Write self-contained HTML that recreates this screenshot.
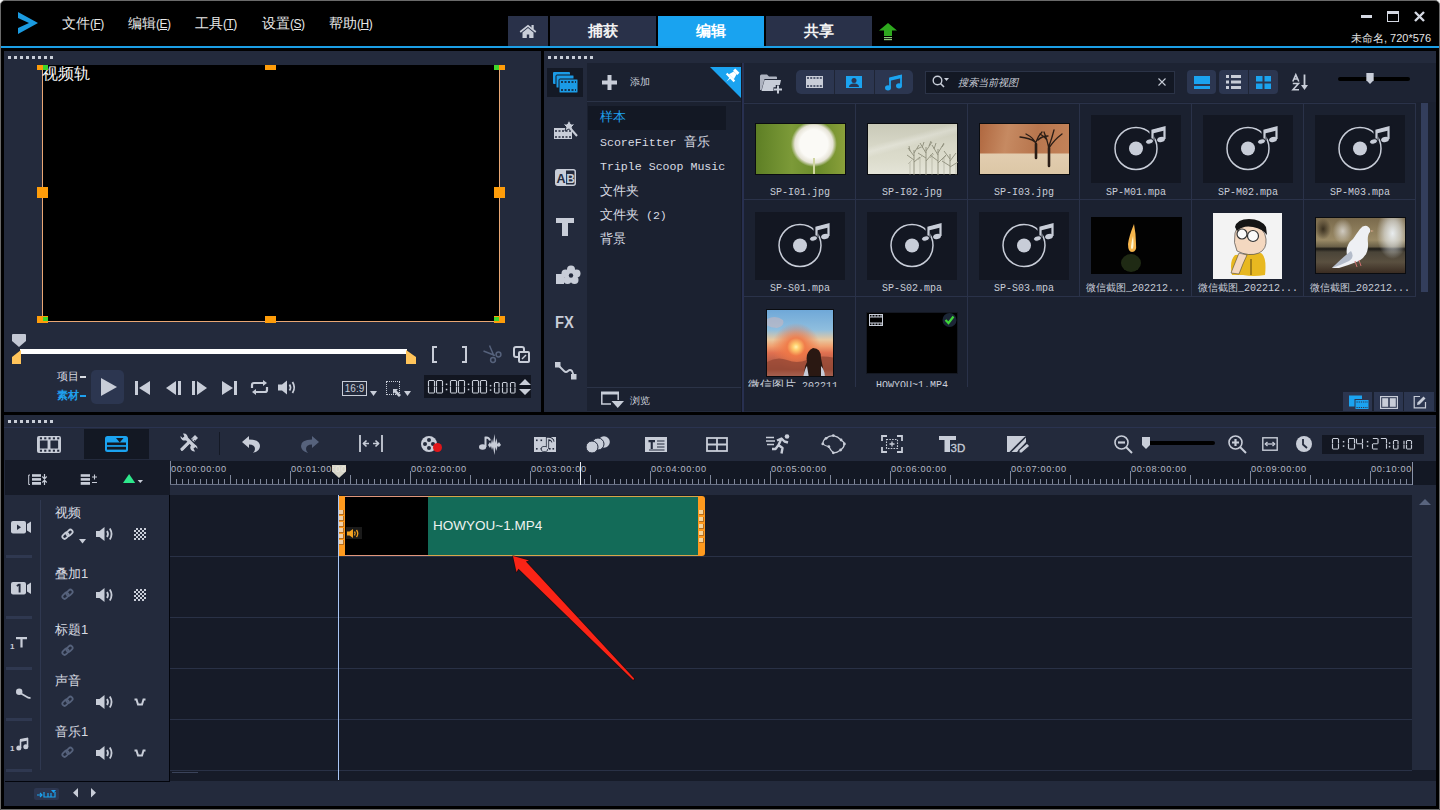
<!DOCTYPE html>
<html><head><meta charset="utf-8">
<style>
*{margin:0;padding:0;box-sizing:border-box}
html,body{width:1440px;height:810px;overflow:hidden;background:#000}
body{position:relative;font-family:"Liberation Sans",sans-serif;color:#d8dbe3}
.a{position:absolute}
.mono{font-family:"Liberation Mono",monospace}
.dots{position:absolute;height:3px;background:repeating-linear-gradient(90deg,#c9ced8 0 3px,transparent 3px 6px)}
svg{position:absolute;overflow:visible}
</style></head><body>
<!-- window frame -->
<div class="a" style="left:0;top:0;width:6px;height:6px;background:#f4f4f4"></div><div class="a" style="left:1434px;top:0;width:6px;height:6px;background:#f4f4f4"></div><div class="a" style="left:0;top:0;width:1440px;height:810px;background:#000;border:1px solid #6a6a6a;border-radius:5px 5px 0 0"></div>

<!-- TITLE BAR -->
<div id="title">
  <svg style="left:17px;top:11px" width="22" height="24" viewBox="0 0 22 24"><path d="M1 1 L21 12 L1 23 L1 17 L12 12 L1 7 Z" fill="#1b9be0"/></svg>
  <div class="a" style="left:62px;top:15px;font-size:14px;color:#e8e8e8;white-space:nowrap">文件<span style="font-size:12px;letter-spacing:-0.5px">(<u style="text-decoration-thickness:1px;text-underline-offset:1px">F</u>)</span></div>
  <div class="a" style="left:128px;top:15px;font-size:14px;color:#e8e8e8;white-space:nowrap">编辑<span style="font-size:12px;letter-spacing:-0.5px">(<u style="text-decoration-thickness:1px;text-underline-offset:1px">E</u>)</span></div>
  <div class="a" style="left:195px;top:15px;font-size:14px;color:#e8e8e8;white-space:nowrap">工具<span style="font-size:12px;letter-spacing:-0.5px">(<u style="text-decoration-thickness:1px;text-underline-offset:1px">T</u>)</span></div>
  <div class="a" style="left:262px;top:15px;font-size:14px;color:#e8e8e8;white-space:nowrap">设置<span style="font-size:12px;letter-spacing:-0.5px">(<u style="text-decoration-thickness:1px;text-underline-offset:1px">S</u>)</span></div>
  <div class="a" style="left:329px;top:15px;font-size:14px;color:#e8e8e8;white-space:nowrap">帮助<span style="font-size:12px;letter-spacing:-0.5px">(<u style="text-decoration-thickness:1px;text-underline-offset:1px">H</u>)</span></div>
  <!-- tabs -->
  <div class="a" style="left:508px;top:16px;width:40px;height:30px;background:#293149"></div>
  <svg style="left:519px;top:24px" width="18" height="15" viewBox="0 0 18 15"><path d="M3.5 8.5 L9 4 L14.5 8.5 V14 H10.2 V10.5 H7.8 V14 H3.5Z" fill="#c8cdd8"/><path d="M1.2 8 L9 1.8 L16.8 8" stroke="#c8cdd8" stroke-width="1.7" fill="none"/><rect x="12.5" y="1" width="2.2" height="4" fill="#c8cdd8"/></svg>
  <div class="a" style="left:550px;top:16px;width:106px;height:30px;background:#293149;text-align:center;line-height:30px;font-size:15px;font-weight:bold;color:#f2f2f2">捕获</div>
  <div class="a" style="left:658px;top:16px;width:106px;height:30px;background:#19a3f0;text-align:center;line-height:30px;font-size:15px;font-weight:bold;color:#fff">编辑</div>
  <div class="a" style="left:766px;top:16px;width:106px;height:30px;background:#293149;text-align:center;line-height:30px;font-size:15px;font-weight:bold;color:#f2f2f2">共享</div>
  <svg style="left:879px;top:23px" width="19" height="18" viewBox="0 0 19 18"><path d="M9 0 L18 7.5 H13 V13 H5 V7.5 H0Z" fill="#2ea81e"/><rect x="5" y="14" width="8" height="1.2" fill="#8cc878"/><rect x="5" y="16" width="8" height="1.2" fill="#8cc878"/></svg>
  <!-- window controls -->
  <div class="a" style="left:1361px;top:15px;width:11px;height:3px;background:#d4d8e2"></div>
  <div class="a" style="left:1387px;top:11px;width:12px;height:11px;border:1px solid #d4d8e2;border-top-width:3px"></div>
  <svg style="left:1414px;top:11px" width="11" height="11" viewBox="0 0 11 11"><path d="M1 1 L10 10 M10 1 L1 10" stroke="#d4d8e2" stroke-width="2.4"/></svg>
  <div class="a" style="left:1351px;top:31px;font-size:11px;color:#e4e4e4;white-space:nowrap">未命名, 720*576</div>
</div>
<!-- blue line -->
<div class="a" style="left:1px;top:46px;width:1438px;height:2px;background:#1c9fe6"></div>

<!-- PREVIEW PANEL -->
<div class="a" style="left:4px;top:51px;width:537px;height:361px;background:#232a3c"></div>
<div class="dots" style="left:8px;top:56px;width:48px"></div>


<!-- preview black -->
<div class="a" style="left:42px;top:65px;width:458px;height:257px;background:#000;border:1px solid #e9a774;border-top:none"></div>
<div class="a" style="left:42px;top:65px;font-size:16px;color:#f8f8f8;line-height:17px">视频轨</div>
<!-- handles -->
<div class="a" style="left:37px;top:65px;width:11px;height:5px;background:#ff9d0a"></div>
<div class="a" style="left:43px;top:65px;width:5px;height:5px;background:#3ed62c"></div>
<div class="a" style="left:265px;top:65px;width:11px;height:5px;background:#ff9d0a"></div>
<div class="a" style="left:494px;top:65px;width:11px;height:5px;background:#ff9d0a"></div>
<div class="a" style="left:494px;top:65px;width:5px;height:5px;background:#3ed62c"></div>
<div class="a" style="left:37px;top:187px;width:11px;height:11px;background:#ff9d0a"></div>
<div class="a" style="left:494px;top:187px;width:11px;height:11px;background:#ff9d0a"></div>
<div class="a" style="left:37px;top:316px;width:11px;height:7px;background:#ff9d0a"></div>
<div class="a" style="left:43px;top:317px;width:5px;height:4px;background:#3ed62c"></div>
<div class="a" style="left:265px;top:316px;width:11px;height:7px;background:#ff9d0a"></div>
<div class="a" style="left:494px;top:316px;width:11px;height:7px;background:#ff9d0a"></div>
<div class="a" style="left:494px;top:317px;width:5px;height:4px;background:#3ed62c"></div>
<!-- scrubber -->
<svg style="left:12px;top:334px" width="14" height="14" viewBox="0 0 14 14"><path d="M1 0 H13 Q14 0 14 1 V7 L7 13 L0 7 V1 Q0 0 1 0Z" fill="#c3c8d4"/></svg>
<div class="a" style="left:20px;top:349px;width:387px;height:5px;background:#fff"></div>
<svg style="left:12px;top:350px" width="10" height="14" viewBox="0 0 10 14"><path d="M9 0 V14 H0 V7 Z" fill="#ffc45a"/></svg>
<svg style="left:406px;top:350px" width="10" height="14" viewBox="0 0 10 14"><path d="M0 0 V14 H10 V7 Z" fill="#ffc45a"/></svg>
<!-- bracket / scissors / copy -->
<svg style="left:431px;top:346px" width="8" height="17" viewBox="0 0 8 17"><path d="M6 1 H2 V16 H6" stroke="#c8cdd8" stroke-width="2" fill="none"/></svg>
<svg style="left:461px;top:346px" width="8" height="17" viewBox="0 0 8 17"><path d="M1 1 H5 V16 H1" stroke="#c8cdd8" stroke-width="2" fill="none"/></svg>
<svg style="left:483px;top:345px" width="20" height="19" viewBox="0 0 20 19"><path d="M6.5 0.5 L11 11 M0.5 6 L12 10.5" stroke="#56627c" stroke-width="1.5" fill="none"/><circle cx="15.5" cy="9.5" r="2.4" stroke="#56627c" stroke-width="1.5" fill="none"/><circle cx="10" cy="15" r="2.4" stroke="#56627c" stroke-width="1.5" fill="none"/></svg>
<svg style="left:513px;top:346px" width="17" height="17" viewBox="0 0 17 17"><rect x="1" y="1" width="10" height="10" rx="2" stroke="#c8cdd8" stroke-width="2" fill="none"/><rect x="6" y="6" width="10" height="10" rx="1" stroke="#c8cdd8" stroke-width="2" fill="#232a3c"/><path d="M9 13 L13 9" stroke="#c8cdd8" stroke-width="1.5"/></svg>
<!-- project/clip labels -->
<div class="a" style="left:57px;top:369px;font-size:11px;color:#d8dbe2;white-space:nowrap;line-height:14px">项目<span style="display:inline-block;width:6px;height:2px;background:#d8dbe2;vertical-align:middle;margin-left:1px"></span></div>
<div class="a" style="left:57px;top:388px;font-size:11px;color:#1fa0ee;white-space:nowrap;line-height:14px;font-weight:bold">素材<span style="display:inline-block;width:6px;height:2px;background:#1fa0ee;vertical-align:middle;margin-left:1px"></span></div>
<div class="a" style="left:91px;top:370px;width:33px;height:34px;background:#2c3650;border-radius:5px"></div>
<svg style="left:101px;top:378px" width="16" height="18" viewBox="0 0 16 18"><path d="M0 0 L16 9 L0 18Z" fill="#c8cdd8"/></svg>
<svg style="left:135px;top:381px" width="15" height="14" viewBox="0 0 15 14"><rect x="0" y="0" width="3" height="14" fill="#c8cdd8"/><path d="M15 0 V14 L4 7Z" fill="#c8cdd8"/></svg>
<svg style="left:166px;top:381px" width="15" height="14" viewBox="0 0 15 14"><path d="M10 0 V14 L0 7Z" fill="#c8cdd8"/><rect x="12" y="0" width="3" height="14" fill="#c8cdd8"/></svg>
<svg style="left:192px;top:381px" width="15" height="14" viewBox="0 0 15 14"><rect x="0" y="0" width="3" height="14" fill="#c8cdd8"/><path d="M5 0 V14 L15 7Z" fill="#c8cdd8"/></svg>
<svg style="left:222px;top:381px" width="15" height="14" viewBox="0 0 15 14"><path d="M0 0 V14 L11 7Z" fill="#c8cdd8"/><rect x="12" y="0" width="3" height="14" fill="#c8cdd8"/></svg>
<svg style="left:250px;top:380px" width="19" height="15" viewBox="0 0 19 15"><path d="M2 8 V5 Q2 3 4 3 H14" stroke="#c8cdd8" stroke-width="2.2" fill="none"/><path d="M13 0 L17 3 L13 6Z" fill="#c8cdd8"/><path d="M17 7 V10 Q17 12 15 12 H5" stroke="#c8cdd8" stroke-width="2.2" fill="none"/><path d="M6 9 L2 12 L6 15Z" fill="#c8cdd8"/></svg>
<svg style="left:278px;top:380px" width="19" height="15" viewBox="0 0 19 15"><path d="M0 4.5 H4 L9 0.5 V14.5 L4 10.5 H0Z" fill="#c8cdd8"/><path d="M11.5 4.5 Q13.5 7.5 11.5 10.5 M14.5 2 Q18 7.5 14.5 13" stroke="#c8cdd8" stroke-width="1.8" fill="none"/></svg>
<!-- aspect / select -->
<div class="a" style="left:342px;top:381px;width:25px;height:15px;border:1px solid #c8cdd8;font-size:10px;line-height:13px;text-align:center;color:#c8cdd8">16:9</div>
<svg style="left:370px;top:391px" width="7" height="5" viewBox="0 0 7 5"><path d="M0 0 H7 L3.5 5Z" fill="#c8cdd8"/></svg>
<div class="a" style="left:386px;top:381px;width:14px;height:14px;border:1px dotted #c8cdd8"></div>
<svg style="left:393px;top:389px" width="8" height="8" viewBox="0 0 8 8"><path d="M0 0 H5 L3.5 1.5 L8 6 L6 8 L1.5 3.5 L0 5Z" fill="#c8cdd8"/></svg>
<svg style="left:404px;top:391px" width="7" height="5" viewBox="0 0 7 5"><path d="M0 0 H7 L3.5 5Z" fill="#c8cdd8"/></svg>
<!-- timecode -->
<div class="a" style="left:424px;top:375px;width:107px;height:23px;background:#121621"></div>
<svg style="left:0;top:0" width="1440" height="810" viewBox="0 0 1440 810"><path d="M429.40 380.50 H433.60 M429.40 393.00 H433.60 M428.50 381.40 V385.85 M428.50 387.65 V392.10 M434.50 381.40 V385.85 M434.50 387.65 V392.10 M437.40 380.50 H441.60 M437.40 393.00 H441.60 M436.50 381.40 V385.85 M436.50 387.65 V392.10 M442.50 381.40 V385.85 M442.50 387.65 V392.10 M451.40 380.50 H455.60 M451.40 393.00 H455.60 M450.50 381.40 V385.85 M450.50 387.65 V392.10 M456.50 381.40 V385.85 M456.50 387.65 V392.10 M459.40 380.50 H463.60 M459.40 393.00 H463.60 M458.50 381.40 V385.85 M458.50 387.65 V392.10 M464.50 381.40 V385.85 M464.50 387.65 V392.10 M473.40 380.50 H477.60 M473.40 393.00 H477.60 M472.50 381.40 V385.85 M472.50 387.65 V392.10 M478.50 381.40 V385.85 M478.50 387.65 V392.10 M481.40 380.50 H485.60 M481.40 393.00 H485.60 M480.50 381.40 V385.85 M480.50 387.65 V392.10 M486.50 381.40 V385.85 M486.50 387.65 V392.10 M495.40 382.50 H498.10 M495.40 393.00 H498.10 M494.50 383.40 V386.85 M494.50 388.65 V392.10 M499.00 383.40 V386.85 M499.00 388.65 V392.10 M503.40 382.50 H506.10 M503.40 393.00 H506.10 M502.50 383.40 V386.85 M502.50 388.65 V392.10 M507.00 383.40 V386.85 M507.00 388.65 V392.10 M511.40 382.50 H514.10 M511.40 393.00 H514.10 M510.50 383.40 V386.85 M510.50 388.65 V392.10 M515.00 383.40 V386.85 M515.00 388.65 V392.10" stroke="#c8cdd8" stroke-width="1.15" fill="none" stroke-linecap="square"/><rect x="445.80" y="383.55" width="1.5" height="1.5" fill="#c8cdd8"/><rect x="445.80" y="388.80" width="1.5" height="1.5" fill="#c8cdd8"/><rect x="467.80" y="383.55" width="1.5" height="1.5" fill="#c8cdd8"/><rect x="467.80" y="388.80" width="1.5" height="1.5" fill="#c8cdd8"/><rect x="489.80" y="384.95" width="1.5" height="1.5" fill="#c8cdd8"/><rect x="489.80" y="389.36" width="1.5" height="1.5" fill="#c8cdd8"/></svg>
<svg style="left:519px;top:378px" width="12" height="18" viewBox="0 0 12 18"><path d="M0 7 L6 1 L12 7Z M0 11 L6 17 L12 11Z" fill="#c8cdd8"/></svg>

<!-- LIBRARY PANEL -->
<div class="a" style="left:544px;top:51px;width:892px;height:361px;background:#232a3c"></div>
<div class="dots" style="left:548px;top:56px;width:48px"></div>


<!-- left icon column -->
<div class="a" style="left:547px;top:68px;width:36px;height:29px;background:#141925"></div>
<svg style="left:553px;top:72px" width="25" height="22" viewBox="0 0 25 22"><rect x="0" y="0" width="17" height="12" rx="1" fill="#1b9be6"/><rect x="3" y="3" width="18" height="13" rx="1" fill="#1b9be6" stroke="#141925" stroke-width="1"/><rect x="6" y="7" width="19" height="14" rx="1" fill="#1b9be6" stroke="#141925" stroke-width="1"/><path d="M8 10 h15 M8 18 h15" stroke="#141925" stroke-width="1.4" stroke-dasharray="2 1.5"/></svg>
<svg style="left:554px;top:120px" width="24" height="20" viewBox="0 0 24 20"><rect x="0" y="8" width="18" height="11" fill="#c8cdd8"/><path d="M1 11 h16 M1 17 h16" stroke="#232a3c" stroke-width="1.3" stroke-dasharray="2 1.5"/><path d="M15 0 L17 4 L21 4 L18 7 L19 11 L15 9 L11 11 L12 7 L9 4 L13 4Z" fill="#c8cdd8" stroke="#232a3c" stroke-width="1"/><path d="M16 8 L23 16" stroke="#c8cdd8" stroke-width="2"/></svg>
<svg style="left:555px;top:169px" width="21" height="17" viewBox="0 0 21 17"><rect x="0.75" y="0.75" width="19.5" height="15.5" rx="2" fill="none" stroke="#c8cdd8" stroke-width="1.5"/><rect x="1" y="1" width="10" height="15" fill="#c8cdd8"/><text x="1.6" y="13.5" font-family="Liberation Sans" font-size="12.5" font-weight="bold" fill="#232a3c">A</text><text x="11.2" y="13.5" font-family="Liberation Sans" font-size="12" font-weight="bold" fill="#c8cdd8">B</text></svg>
<svg style="left:556px;top:218px" width="18" height="18" viewBox="0 0 18 18"><path d="M0 0 H18 V5 H12 V18 H6 V5 H0Z" fill="#c8cdd8"/></svg>
<svg style="left:556px;top:265px" width="24" height="20" viewBox="0 0 24 20"><path d="M0 9 H6 L8 7 V19 H0Z" fill="#c8cdd8"/><g fill="#c8cdd8"><circle cx="15" cy="4.5" r="4"/><circle cx="20.5" cy="8.5" r="4"/><circle cx="18.5" cy="15" r="4"/><circle cx="11.5" cy="15" r="4"/><circle cx="9.5" cy="8.5" r="4"/><circle cx="15" cy="10.5" r="4"/></g><circle cx="15" cy="10.5" r="2.2" fill="#232a3c"/></svg>
<div class="a" style="left:555px;top:314px;font-size:16px;font-weight:bold;color:#c8cdd8;line-height:18px;letter-spacing:0px;transform:scaleX(0.92);transform-origin:left">FX</div>
<svg style="left:555px;top:362px" width="22" height="18" viewBox="0 0 22 18"><rect x="0" y="0" width="5.5" height="5.5" fill="#c8cdd8"/><rect x="16" y="12" width="5.5" height="5.5" fill="#c8cdd8"/><path d="M3 3 L9 9 Q11 11 13 9 Q15 7 17 9 L19 14" stroke="#c8cdd8" stroke-width="1.8" fill="none"/></svg>

<!-- category list -->
<div class="a" style="left:587px;top:63px;width:154px;height:348px;background:#1b2130"></div>
<div class="a" style="left:587px;top:101px;width:154px;height:1px;background:#2b3347"></div>
<svg style="left:602px;top:75px" width="15" height="15" viewBox="0 0 15 15"><path d="M5.5 0 H9.5 V5.5 H15 V9.5 H9.5 V15 H5.5 V9.5 H0 V5.5 H5.5Z" fill="#c8cdd8"/></svg>
<div class="a" style="left:630px;top:76px;font-size:10px;color:#c8cdd8;line-height:12px">添加</div>
<svg style="left:710px;top:67px" width="31" height="31" viewBox="0 0 31 31"><path d="M0 0 H31 V31Z" fill="#1ba3f0"/><g transform="rotate(45 22 9)"><rect x="19" y="1.5" width="6" height="3" fill="#fff"/><path d="M20 4.5 H24 L25.5 10 H18.5Z" fill="#fff"/><rect x="16.5" y="10" width="11" height="2.2" fill="#fff"/><path d="M21.3 12 H22.7 L22 17Z" fill="#fff"/></g></svg>
<div class="a" style="left:588px;top:106px;width:138px;height:24px;background:#131824"></div>
<div class="a mono" style="left:600px;top:111px;font-size:13px;line-height:14px;color:#1fa0ee">样本</div>
<div class="a mono" style="left:600px;top:136px;font-size:11.6px;line-height:14px;color:#d8dbe2;white-space:pre">ScoreFitter <span style="font-size:13px">音乐</span></div>
<div class="a mono" style="left:600px;top:160px;font-size:11.6px;line-height:14px;color:#d8dbe2;white-space:pre">Triple Scoop Music</div>
<div class="a mono" style="left:600px;top:185px;font-size:13px;line-height:14px;color:#d8dbe2;white-space:pre">文件夹</div>
<div class="a mono" style="left:600px;top:209px;font-size:11.6px;line-height:14px;color:#d8dbe2;white-space:pre"><span style="font-size:13px">文件夹</span> (2)</div>
<div class="a mono" style="left:600px;top:233px;font-size:13px;line-height:14px;color:#d8dbe2;white-space:pre">背景</div>
<div class="a" style="left:587px;top:387px;width:154px;height:1px;background:#2b3347"></div>
<svg style="left:601px;top:391px" width="24" height="18" viewBox="0 0 24 18"><path d="M0.8 1.5 V13 H10 M17.2 1.5 V9" stroke="#c8cdd8" stroke-width="1.5" fill="none"/><rect x="0" y="0.5" width="18" height="3" fill="#c8cdd8"/><path d="M10.5 10 H23 L16.75 17Z" fill="#c8cdd8"/></svg>
<div class="a" style="left:630px;top:395px;font-size:10px;color:#c8cdd8;line-height:12px">浏览</div>
<div class="a" style="left:741px;top:63px;width:1px;height:349px;background:#161a25"></div><div class="a" style="left:742px;top:63px;width:2px;height:349px;background:#283050"></div>

<!-- library toolbar -->
<div class="a" style="left:744px;top:63px;width:692px;height:40px;background:#1d2333"></div>
<svg style="left:760px;top:74px" width="24" height="21" viewBox="0 0 24 21"><path d="M0 2 Q0 0.5 1.5 0.5 H7 L9 2.5 H16 Q17 2.5 17 3.5 V5 H4.5 L1.5 16 H0Z" fill="#aeb3c0"/><path d="M4.5 6 H21 L18.5 17 H1.5Z" fill="#c8cdd8"/><path d="M18 11 V20 M13.5 15.5 H22.5" stroke="#1f2535" stroke-width="4.5"/><path d="M18 11.5 V19.5 M14 15.5 H22" stroke="#c8cdd8" stroke-width="2"/></svg>
<div class="a" style="left:796px;top:70px;width:117px;height:24px;background:#2c3650;border-radius:5px"></div>
<div class="a" style="left:834px;top:70px;width:1px;height:24px;background:#1f2535"></div>
<div class="a" style="left:874px;top:70px;width:1px;height:24px;background:#1f2535"></div>
<svg style="left:806px;top:76px" width="17" height="12" viewBox="0 0 17 12"><rect width="17" height="12" fill="#c8cdd8"/><path d="M1 2 H16 M1 10 H16" stroke="#2c3650" stroke-width="1.3" stroke-dasharray="2 1.2"/><rect x="0" y="4" width="17" height="4" fill="#c8cdd8"/></svg>
<svg style="left:846px;top:76px" width="16" height="12" viewBox="0 0 16 12"><rect width="16" height="12" fill="#1ba3f0"/><circle cx="8" cy="4.5" r="2.5" fill="#2c3650"/><path d="M3 11 Q3 7.5 8 7.5 Q13 7.5 13 11Z" fill="#2c3650"/></svg>
<svg style="left:885px;top:75px" width="18" height="16" viewBox="0 0 18 16"><path d="M5 12.5 V4 L16 1 V10.5" stroke="#1ba3f0" stroke-width="1.8" fill="none"/><path d="M4.2 2.5 L16.8 -0.5 V3 L4.2 6Z" fill="#1ba3f0"/><ellipse cx="3" cy="12.8" rx="3" ry="2.6" fill="#1ba3f0"/><ellipse cx="14" cy="10.8" rx="3" ry="2.6" fill="#1ba3f0"/></svg>
<div class="a" style="left:925px;top:71px;width:250px;height:23px;background:#131824;border:1px solid #2b3347"></div>
<svg style="left:932px;top:75px" width="18" height="14" viewBox="0 0 18 14"><circle cx="5.5" cy="5.5" r="4.3" stroke="#c8cdd8" stroke-width="1.4" fill="none"/><path d="M8.5 8.5 L12 12" stroke="#c8cdd8" stroke-width="1.6"/><path d="M12 3 H17 L14.5 6Z" fill="#c8cdd8"/></svg>
<div class="a" style="left:958px;top:76px;font-size:10.2px;font-style:italic;color:#c8ccd6;line-height:13px">搜索当前视图</div>
<svg style="left:1158px;top:78px" width="8" height="8" viewBox="0 0 8 8"><path d="M0.5 0.5 L7.5 7.5 M7.5 0.5 L0.5 7.5" stroke="#c8cdd8" stroke-width="1.1"/></svg>
<div class="a" style="left:1187px;top:70px;width:29px;height:24px;background:#2c3650;border-radius:4px"></div>
<svg style="left:1194px;top:76px" width="16" height="13" viewBox="0 0 16 13"><rect x="0" y="0" width="16" height="8" fill="#1ba3f0"/><rect x="0" y="10" width="16" height="3" fill="#1ba3f0"/></svg>
<div class="a" style="left:1219px;top:70px;width:59px;height:24px;background:#2c3650;border-radius:4px"></div>
<div class="a" style="left:1248px;top:70px;width:1px;height:24px;background:#1f2535"></div>
<svg style="left:1226px;top:75px" width="15" height="14" viewBox="0 0 15 14"><path d="M0 1.5 H3 M5 1.5 H15 M0 7 H3 M5 7 H15 M0 12.5 H3 M5 12.5 H15" stroke="#c8cdd8" stroke-width="3"/></svg>
<svg style="left:1256px;top:76px" width="15" height="13" viewBox="0 0 15 13"><rect x="0" y="0" width="6.5" height="5.5" fill="#1ba3f0"/><rect x="8.5" y="0" width="6.5" height="5.5" fill="#1ba3f0"/><rect x="0" y="7.5" width="6.5" height="5.5" fill="#1ba3f0"/><rect x="8.5" y="7.5" width="6.5" height="5.5" fill="#1ba3f0"/></svg>
<svg style="left:1292px;top:74px" width="17" height="17" viewBox="0 0 17 17"><path d="M0.8 7.5 L3.8 0.8 L6.8 7.5 M2 5 H5.6" stroke="#c8cdd8" stroke-width="1.6" fill="none"/><path d="M0.8 9.5 H6.5 L1 15.8 H7" stroke="#c8cdd8" stroke-width="1.6" fill="none"/><path d="M12.5 0.5 V12" stroke="#c8cdd8" stroke-width="1.8"/><path d="M9 11 H16 L12.5 16Z" fill="#c8cdd8"/></svg>
<div class="a" style="left:1338px;top:77px;width:72px;height:4px;background:#000;border-radius:2px"></div>
<svg style="left:1366px;top:73px" width="8" height="11" viewBox="0 0 8 12"><path d="M0 0 H8 V8 L4 12 L0 8Z" fill="#c8cdd8"/></svg>

<!-- grid -->
<div class="a" style="left:744px;top:102px;width:692px;height:285px;background:#1b2130"></div>
<div class="a" style="left:744px;top:387px;width:692px;height:24px;background:#1b2130"></div>

<div class="a" style="left:744px;top:103px;width:672px;height:1px;background:#2a3249"></div>
<div class="a" style="left:744px;top:199px;width:672px;height:1px;background:#2a3249"></div>
<div class="a" style="left:744px;top:296px;width:672px;height:1px;background:#2a3249"></div>
<div class="a" style="left:855px;top:103px;width:1px;height:284px;background:#2a3249"></div>
<div class="a" style="left:967px;top:103px;width:1px;height:284px;background:#2a3249"></div>
<div class="a" style="left:1079px;top:103px;width:1px;height:193px;background:#2a3249"></div>
<div class="a" style="left:1191px;top:103px;width:1px;height:193px;background:#2a3249"></div>
<div class="a" style="left:1303px;top:103px;width:1px;height:193px;background:#2a3249"></div>
<div class="a" style="left:1415px;top:103px;width:1px;height:194px;background:#2a3249"></div>
<div class="a" style="left:755px;top:123px;width:91px;height:52px;border:1px solid #0a0c10;background:radial-gradient(circle at 65% 40%, #fbfaf6 0 14px, #e6e3d6 19px, transparent 23px), linear-gradient(90deg,#5e7f25,#7c9a38 40%,#6a8a2a 70%,#8aa03a)"></div>
<div class="a" style="left:867px;top:123px;width:91px;height:52px;border:1px solid #0a0c10;background:linear-gradient(165deg,transparent 30%,rgba(255,255,255,0.25) 38%,transparent 46%),linear-gradient(180deg,#c9c9b8 0,#d6d6c6 40%,#dcdccc 70%,#e4e4d8 100%)"></div>
<div class="a" style="left:979px;top:123px;width:91px;height:52px;border:1px solid #0a0c10;background:linear-gradient(180deg,transparent 58%,#e2cdb0 60%,#dcc7a6 100%),linear-gradient(100deg,#b06840 0,#c68a62 30%,#b8764e 60%,#c4845a 100%)"></div>
<div class="a" style="left:813px;top:158px;width:2px;height:16px;background:#cfd6a0"></div>
<svg style="left:1020px;top:128px" width="44" height="40" viewBox="0 0 44 40"><g stroke="#2a1d16" fill="none" stroke-linecap="round"><path d="M16 30 V16 Q14 10 6 6 M15 14 Q10 10 0 9 M16 14 Q18 8 22 4 M18 12 Q22 8 28 8" stroke-width="1.3"/><path d="M29 38 V22 Q28 14 24 4 M29 20 Q34 12 42 6 M29 18 Q32 10 34 2 M27 12 Q24 8 20 6" stroke-width="1.3"/><path d="M16 30 V16 M29 38 V20" stroke-width="2.6"/></g></svg>
<svg style="left:906px;top:140px" width="52" height="35" viewBox="0 0 52 35"><g stroke="#8d8d7a" stroke-width="0.9" fill="none"><path d="M8 35 V10 M8 16 L2 8 M8 13 L13 5 M8 20 L1 15 M8 22 L14 17 M4 11 L3 6 M11 9 L15 7"/><path d="M20 35 V7 M20 13 L14 3 M20 11 L26 2 M20 18 L12 13 M20 21 L27 13 M16 8 L18 2 M23 6 L25 1"/><path d="M32 35 V9 M32 15 L26 5 M32 13 L38 3 M32 21 L24 15 M32 23 L40 15 M28 9 L30 3 M36 7 L38 4"/><path d="M44 35 V14 M44 19 L38 11 M44 21 L50 13 M44 26 L36 21 M44 27 L52 22"/></g><g stroke="#9a9a88" stroke-width="0.6" fill="none" opacity="0.8"><path d="M4 35 V22 M14 35 V18 M26 35 V16 M38 35 V18 M50 35 V24 M2 24 L6 20 M12 20 L16 16 M24 18 L28 14 M36 20 L40 16"/></g></svg>
<svg style="left:1091px;top:115px" width="90" height="68" viewBox="0 0 90 68"><rect width="90" height="68" fill="#131722"/><circle cx="45" cy="33.5" r="21" stroke="#c8cdd8" stroke-width="1.5" fill="none"/><circle cx="45" cy="33.5" r="7" fill="#c8cdd8"/><path d="M61 25 V16 L74 12.5 V23" stroke="#131722" stroke-width="5" fill="none"/><path d="M61.5 26 V15.5 L73.5 12.5 V24" stroke="#c8cdd8" stroke-width="2.2" fill="none"/><path d="M61.5 15 L73.5 12 V15.5 L61.5 18.5Z" fill="#c8cdd8"/><ellipse cx="58.5" cy="26.5" rx="4" ry="2.6" transform="rotate(-15 58.5 26.5)" fill="#c8cdd8" stroke="#131722" stroke-width="1"/><ellipse cx="70" cy="24.5" rx="4" ry="2.6" transform="rotate(-15 70 24.5)" fill="#c8cdd8"/></svg>
<svg style="left:1203px;top:115px" width="90" height="68" viewBox="0 0 90 68"><rect width="90" height="68" fill="#131722"/><circle cx="45" cy="33.5" r="21" stroke="#c8cdd8" stroke-width="1.5" fill="none"/><circle cx="45" cy="33.5" r="7" fill="#c8cdd8"/><path d="M61 25 V16 L74 12.5 V23" stroke="#131722" stroke-width="5" fill="none"/><path d="M61.5 26 V15.5 L73.5 12.5 V24" stroke="#c8cdd8" stroke-width="2.2" fill="none"/><path d="M61.5 15 L73.5 12 V15.5 L61.5 18.5Z" fill="#c8cdd8"/><ellipse cx="58.5" cy="26.5" rx="4" ry="2.6" transform="rotate(-15 58.5 26.5)" fill="#c8cdd8" stroke="#131722" stroke-width="1"/><ellipse cx="70" cy="24.5" rx="4" ry="2.6" transform="rotate(-15 70 24.5)" fill="#c8cdd8"/></svg>
<svg style="left:1315px;top:115px" width="90" height="68" viewBox="0 0 90 68"><rect width="90" height="68" fill="#131722"/><circle cx="45" cy="33.5" r="21" stroke="#c8cdd8" stroke-width="1.5" fill="none"/><circle cx="45" cy="33.5" r="7" fill="#c8cdd8"/><path d="M61 25 V16 L74 12.5 V23" stroke="#131722" stroke-width="5" fill="none"/><path d="M61.5 26 V15.5 L73.5 12.5 V24" stroke="#c8cdd8" stroke-width="2.2" fill="none"/><path d="M61.5 15 L73.5 12 V15.5 L61.5 18.5Z" fill="#c8cdd8"/><ellipse cx="58.5" cy="26.5" rx="4" ry="2.6" transform="rotate(-15 58.5 26.5)" fill="#c8cdd8" stroke="#131722" stroke-width="1"/><ellipse cx="70" cy="24.5" rx="4" ry="2.6" transform="rotate(-15 70 24.5)" fill="#c8cdd8"/></svg>
<div class="a mono" style="left:744px;top:187px;width:112px;text-align:center;font-size:10px;line-height:12px;color:#c8cdd8;white-space:pre">SP-I01.jpg</div>
<div class="a mono" style="left:856px;top:187px;width:112px;text-align:center;font-size:10px;line-height:12px;color:#c8cdd8;white-space:pre">SP-I02.jpg</div>
<div class="a mono" style="left:968px;top:187px;width:112px;text-align:center;font-size:10px;line-height:12px;color:#c8cdd8;white-space:pre">SP-I03.jpg</div>
<div class="a mono" style="left:1080px;top:187px;width:112px;text-align:center;font-size:10px;line-height:12px;color:#c8cdd8;white-space:pre">SP-M01.mpa</div>
<div class="a mono" style="left:1192px;top:187px;width:112px;text-align:center;font-size:10px;line-height:12px;color:#c8cdd8;white-space:pre">SP-M02.mpa</div>
<div class="a mono" style="left:1304px;top:187px;width:112px;text-align:center;font-size:10px;line-height:12px;color:#c8cdd8;white-space:pre">SP-M03.mpa</div>
<svg style="left:755px;top:212px" width="90" height="68" viewBox="0 0 90 68"><rect width="90" height="68" fill="#131722"/><circle cx="45" cy="33.5" r="21" stroke="#c8cdd8" stroke-width="1.5" fill="none"/><circle cx="45" cy="33.5" r="7" fill="#c8cdd8"/><path d="M61 25 V16 L74 12.5 V23" stroke="#131722" stroke-width="5" fill="none"/><path d="M61.5 26 V15.5 L73.5 12.5 V24" stroke="#c8cdd8" stroke-width="2.2" fill="none"/><path d="M61.5 15 L73.5 12 V15.5 L61.5 18.5Z" fill="#c8cdd8"/><ellipse cx="58.5" cy="26.5" rx="4" ry="2.6" transform="rotate(-15 58.5 26.5)" fill="#c8cdd8" stroke="#131722" stroke-width="1"/><ellipse cx="70" cy="24.5" rx="4" ry="2.6" transform="rotate(-15 70 24.5)" fill="#c8cdd8"/></svg>
<svg style="left:867px;top:212px" width="90" height="68" viewBox="0 0 90 68"><rect width="90" height="68" fill="#131722"/><circle cx="45" cy="33.5" r="21" stroke="#c8cdd8" stroke-width="1.5" fill="none"/><circle cx="45" cy="33.5" r="7" fill="#c8cdd8"/><path d="M61 25 V16 L74 12.5 V23" stroke="#131722" stroke-width="5" fill="none"/><path d="M61.5 26 V15.5 L73.5 12.5 V24" stroke="#c8cdd8" stroke-width="2.2" fill="none"/><path d="M61.5 15 L73.5 12 V15.5 L61.5 18.5Z" fill="#c8cdd8"/><ellipse cx="58.5" cy="26.5" rx="4" ry="2.6" transform="rotate(-15 58.5 26.5)" fill="#c8cdd8" stroke="#131722" stroke-width="1"/><ellipse cx="70" cy="24.5" rx="4" ry="2.6" transform="rotate(-15 70 24.5)" fill="#c8cdd8"/></svg>
<svg style="left:979px;top:212px" width="90" height="68" viewBox="0 0 90 68"><rect width="90" height="68" fill="#131722"/><circle cx="45" cy="33.5" r="21" stroke="#c8cdd8" stroke-width="1.5" fill="none"/><circle cx="45" cy="33.5" r="7" fill="#c8cdd8"/><path d="M61 25 V16 L74 12.5 V23" stroke="#131722" stroke-width="5" fill="none"/><path d="M61.5 26 V15.5 L73.5 12.5 V24" stroke="#c8cdd8" stroke-width="2.2" fill="none"/><path d="M61.5 15 L73.5 12 V15.5 L61.5 18.5Z" fill="#c8cdd8"/><ellipse cx="58.5" cy="26.5" rx="4" ry="2.6" transform="rotate(-15 58.5 26.5)" fill="#c8cdd8" stroke="#131722" stroke-width="1"/><ellipse cx="70" cy="24.5" rx="4" ry="2.6" transform="rotate(-15 70 24.5)" fill="#c8cdd8"/></svg>
<div class="a" style="left:1091px;top:217px;width:91px;height:57px;background:#020202"></div>
<svg style="left:1120px;top:222px" width="30" height="52" viewBox="0 0 30 52"><ellipse cx="11" cy="41" rx="10" ry="9" fill="#1f2a14"/><path d="M14 2 Q9 14 8 22 Q8 30 12 30 Q17 30 16 22 Q16 12 14 2Z" fill="#f6b54c"/><path d="M13 14 Q11 22 11 26 Q12 28 13 26 Q14 22 13 14Z" fill="#fff6d0"/></svg>
<div class="a" style="left:1213px;top:213px;width:69px;height:66px;background:#f3f3f3"></div>
<svg style="left:1213px;top:213px" width="69" height="66" viewBox="0 0 69 66"><path d="M19 62 Q16 48 22 42 L48 40 Q54 44 52 62 Q40 64 30 62Z" fill="#e8b820"/><path d="M24 38 Q20 30 22 20 Q24 10 38 12 Q52 14 53 26 Q54 36 46 40 Q36 44 24 38Z" fill="#f4d8c0" stroke="#333" stroke-width="0.6"/><path d="M22 14 Q24 6 36 6 Q48 6 53 14 L54 22 Q50 16 40 14 Q30 12 24 18Z" fill="#151515"/><circle cx="29" cy="21" r="5" fill="#fafafa" stroke="#333" stroke-width="1.2"/><circle cx="40" cy="23" r="5.5" fill="#fafafa" stroke="#333" stroke-width="1.2"/><path d="M26 40 Q22 50 18 60 L26 61 Q30 50 34 42Z" fill="#f4d8c0" stroke="#333" stroke-width="0.5"/><path d="M38 46 V62" stroke="#5a4410" stroke-width="1"/></svg>
<div class="a" style="left:1315px;top:217px;width:91px;height:57px;border:1px solid #0a0c10;background:radial-gradient(ellipse 10px 16px at 86% 28%,#e8ecee 0,rgba(232,236,238,0.6) 8px,transparent 16px),radial-gradient(ellipse 8px 10px at 30% 24%,#cfcac0 0,transparent 10px),radial-gradient(ellipse 6px 8px at 8% 20%,#3a3020 0,transparent 8px),linear-gradient(180deg,#7a6a4c 0,#9a8a66 40%,#6a6048 52%,#1e1c18 56%,#4a4438 62%,#5a5040 80%,#3a2c22 100%)"></div>
<svg style="left:1315px;top:217px" width="91" height="57" viewBox="0 0 91 57"><path d="M17 51 Q26 44 32 38 Q30 28 38 22 Q42 16 45 12 Q48 8 52 9 Q56 11 55 15 Q52 18 53 26 Q54 38 44 44 Q34 48 24 51Z" fill="#eef0f4"/><path d="M17 51 Q28 40 36 34 Q40 40 34 44 Q26 48 17 51Z" fill="#b4bcca"/><path d="M56 13 L59 14 L56 15Z" fill="#c8a080"/><path d="M40 44 L42 50 M44 43 L46 49" stroke="#d07070" stroke-width="1"/></svg>
<div class="a mono" style="left:744px;top:283px;width:112px;text-align:center;font-size:10px;line-height:12px;color:#c8cdd8;white-space:pre">SP-S01.mpa</div>
<div class="a mono" style="left:856px;top:283px;width:112px;text-align:center;font-size:10px;line-height:12px;color:#c8cdd8;white-space:pre">SP-S02.mpa</div>
<div class="a mono" style="left:968px;top:283px;width:112px;text-align:center;font-size:10px;line-height:12px;color:#c8cdd8;white-space:pre">SP-S03.mpa</div>
<div class="a mono" style="left:1080px;top:283px;width:112px;text-align:center;font-size:10px;line-height:12px;color:#c8cdd8;white-space:pre">微信截图_202212...</div>
<div class="a mono" style="left:1192px;top:283px;width:112px;text-align:center;font-size:10px;line-height:12px;color:#c8cdd8;white-space:pre">微信截图_202212...</div>
<div class="a mono" style="left:1304px;top:283px;width:112px;text-align:center;font-size:10px;line-height:12px;color:#c8cdd8;white-space:pre">微信截图_202212...</div>
<div class="a" style="left:766px;top:309px;width:68px;height:68px;border:1px solid #0a0c10;overflow:hidden;background:radial-gradient(circle at 44% 56%,#fff2b0 0,#ffd070 3px,rgba(240,120,70,0.9) 9px,transparent 24px),linear-gradient(180deg,#6fa8d8 0,#8fbede 30%,#e8c8a0 45%,#f0a070 55%,#e07050 65%,#b8604a 78%,#8a4838 90%,#c8a8a0 96%,#e0d0d0 100%)"><svg style="left:0;top:0" width="68" height="68" viewBox="0 0 68 68"><path d="M0 52 Q10 46 20 50 Q30 54 40 50 Q52 44 68 48 V66 H0Z" fill="#9a4a36" opacity="0.85"/><path d="M-2 10 Q8 4 16 10 Q18 16 10 18 Q2 18 -2 14Z" fill="#c8b8c0" opacity="0.6"/><path d="M38 68 Q36 58 40 52 Q38 42 46 38 Q54 38 54 48 Q56 58 58 68Z" fill="#2a1812"/><path d="M36 68 Q38 58 40 56 L42 68Z M54 56 Q58 60 58 68 H54Z" fill="#c8ccd8"/></svg></div>
<div class="a" style="left:866px;top:312px;width:92px;height:62px;background:#000;border:1px solid #141822"></div>
<svg style="left:869px;top:314px" width="14" height="12" viewBox="0 0 14 12"><rect x="0.5" y="0.5" width="13" height="11" fill="#000" stroke="#c8cdd8"/><path d="M1 3 H13 M1 9 H13" stroke="#c8cdd8" stroke-width="1"/><path d="M3 1 V3 M6 1 V3 M9 1 V3 M12 1 V3 M3 9 V11 M6 9 V11 M9 9 V11 M12 9 V11" stroke="#c8cdd8"/></svg>
<svg style="left:942px;top:313px" width="15" height="14" viewBox="0 0 15 14"><circle cx="7.5" cy="7" r="7" fill="#1b2636"/><path d="M3.5 7 L6.5 10 L11.5 3.5" stroke="#3fd63a" stroke-width="2.2" fill="none"/></svg>

<div class="a mono" style="left:748px;top:379px;width:100px;height:8px;overflow:hidden;font-size:10px;line-height:14px;color:#c8cdd8;white-space:pre"><span style="font-size:12px">微信图片</span>_202211</div>
<div class="a mono" style="left:856px;top:379px;width:112px;height:8px;overflow:hidden;text-align:center;font-size:10px;line-height:14px;color:#c8cdd8;white-space:pre">HOWYOU~1.MP4</div>
<div class="a" style="left:1421px;top:103px;width:7px;height:189px;background:#333e5c"></div>
<div class="a" style="left:1343px;top:392px;width:29px;height:19px;background:#2c3650"></div>
<svg style="left:1349px;top:395px" width="20" height="15" viewBox="0 0 20 15"><rect x="0" y="0.5" width="13" height="11" fill="#1ba3f0"/><rect x="6" y="4.5" width="14" height="10" fill="#1ba3f0" stroke="#2c3650" stroke-width="1"/><path d="M7.5 7 H19 M7.5 12.5 H19" stroke="#2c3650" stroke-width="1" stroke-dasharray="1.2 1"/></svg>
<div class="a" style="left:1374px;top:392px;width:29px;height:19px;background:#2c3650"></div>
<svg style="left:1380px;top:396px" width="18" height="13" viewBox="0 0 18 13"><rect x="0.6" y="0.6" width="16.8" height="11.8" stroke="#c8cdd8" stroke-width="1.2" fill="none"/><rect x="2.2" y="2.2" width="6" height="8.6" fill="#c8cdd8"/><rect x="9.8" y="2.2" width="6" height="8.6" fill="#c8cdd8"/></svg>
<div class="a" style="left:1404px;top:392px;width:30px;height:19px;background:#2c3650"></div>
<svg style="left:1413px;top:395px" width="14" height="14" viewBox="0 0 14 14"><path d="M7 1.5 H1.2 V12.8 H12.5 V7" stroke="#c8cdd8" stroke-width="1.2" fill="none"/><path d="M4 10 L4.5 7.5 L10.5 1.5 L12.5 3.5 L6.5 9.5Z" fill="#c8cdd8"/></svg>
<!-- TIMELINE PANEL -->
<div class="a" style="left:4px;top:415px;width:1432px;height:391px;background:#232a3c"></div>
<div class="dots" style="left:8px;top:420px;width:48px"></div>

<!-- TIMELINE CONTENT -->
<div class="a" style="left:4px;top:427px;width:1432px;height:1px;background:#2a3350"></div>
<svg style="left:37px;top:436px" width="24" height="17" viewBox="0 0 25 17" preserveAspectRatio="none"><rect x="0" y="0" width="25" height="17" rx="2" fill="#c8cdd8"/><g fill="#232a3c"><rect x="3" y="1.3" width="2.2" height="2"/><rect x="7.5" y="1.3" width="2.2" height="2"/><rect x="12" y="1.3" width="2.2" height="2"/><rect x="16.5" y="1.3" width="2.2" height="2"/><rect x="21" y="1.3" width="2.2" height="2"/><rect x="3" y="13.7" width="2.2" height="2"/><rect x="7.5" y="13.7" width="2.2" height="2"/><rect x="12" y="13.7" width="2.2" height="2"/><rect x="16.5" y="13.7" width="2.2" height="2"/><rect x="21" y="13.7" width="2.2" height="2"/><rect x="3" y="4.5" width="8" height="8"/><rect x="14" y="4.5" width="8" height="8"/></g></svg>
<div class="a" style="left:84px;top:429px;width:65px;height:30px;background:#131823"></div>
<svg style="left:105px;top:436px" width="23" height="16" viewBox="0 0 23 16"><rect x="0" y="0" width="23" height="16" rx="2.5" fill="#1ba3f0"/><rect x="2" y="6.5" width="19" height="2.6" fill="#131823"/><rect x="2" y="10.8" width="19" height="2.8" fill="#131823"/><path d="M11 2 H18.5 L14.75 6.5Z" fill="#131823"/></svg>
<svg style="left:179px;top:433px" width="20" height="19" viewBox="0 0 20 19"><path d="M4 17.5 L2 18 L2.5 16 L11 7.5 L12.5 9Z" fill="#c8cdd8"/><path d="M1 16 L9 8 L11 10 L3 18Z" fill="#c8cdd8"/><path d="M12 6 L16 2 L19 5 L15 9Z" fill="#c8cdd8"/><path d="M12.5 7 L14 5.5 M14.5 8.5 L16 7" stroke="#232a3c" stroke-width="0.8"/><path d="M5.5 3.5 L15.5 13.5" stroke="#c8cdd8" stroke-width="3.2"/><path d="M1.5 3 A4 4 0 0 0 7.5 7 L8.5 6 A4 4 0 0 0 4 0.5 L5.5 3.5 L3.5 5Z" fill="#c8cdd8"/><path d="M18.5 16 A4 4 0 0 0 12.5 12 L11.5 13 A4 4 0 0 0 16 18.5 L14.5 15.5 L16.5 14Z" fill="#c8cdd8"/></svg>
<div class="a" style="left:219px;top:432px;width:1px;height:23px;background:#141925"></div>
<svg style="left:242px;top:436px" width="18" height="17" viewBox="0 0 18 17"><path d="M7 0 L0 6 L7 12 V8.5 Q13 8.5 13 13 Q13 15 11 17 Q18 15 18 10 Q18 3.5 7 3.5Z" fill="#c8cdd8"/></svg>
<svg style="left:301px;top:436px" width="18" height="17" viewBox="0 0 18 17"><path d="M11 0 L18 6 L11 12 V8.5 Q5 8.5 5 13 Q5 15 7 17 Q0 15 0 10 Q0 3.5 11 3.5Z" fill="#56627c"/></svg>
<svg style="left:359px;top:435px" width="24" height="17" viewBox="0 0 24 17"><path d="M1 0 V17 M23 0 V17" stroke="#c8cdd8" stroke-width="1.8"/><path d="M4 8.5 H10 M14 8.5 H20" stroke="#c8cdd8" stroke-width="1.6"/><path d="M7.5 5.5 L4.5 8.5 L7.5 11.5 M16.5 5.5 L19.5 8.5 L16.5 11.5" stroke="#c8cdd8" stroke-width="1.6" fill="none"/></svg>
<svg style="left:421px;top:436px" width="22" height="17" viewBox="0 0 22 17"><circle cx="8" cy="8" r="8" fill="#c8cdd8"/><circle cx="8" cy="4" r="2" fill="#232a3c"/><circle cx="4" cy="8" r="2" fill="#232a3c"/><circle cx="12" cy="8" r="2" fill="#232a3c"/><circle cx="8" cy="12" r="2" fill="#232a3c"/><circle cx="16.5" cy="11.5" r="4.5" fill="#e0161a"/></svg>
<svg style="left:478px;top:434px" width="24" height="21" viewBox="0 0 24 21"><path d="M7.5 13 V3.5 Q11 3 12 6.5" stroke="#c8cdd8" stroke-width="2" fill="none"/><ellipse cx="4.6" cy="13" rx="3.6" ry="2.8" fill="#c8cdd8"/><path d="M10 11 L12 8 L13 10 L14 5 L15 9 L16.5 0 L17.5 9 L18.5 4 L19.5 10 L21 8 L23 11 L21 13 L19.5 12 L18.5 17 L17.5 13 L16.5 21 L15 13 L14 16 L13 12 L12 14Z" fill="#c8cdd8"/></svg>
<svg style="left:534px;top:437px" width="22" height="15" viewBox="0 0 22 15"><rect width="22" height="15" fill="#c8cdd8"/><g fill="#232a3c"><rect x="2" y="2.5" width="1.6" height="1.6"/><rect x="6.5" y="2.5" width="1.6" height="1.6"/><rect x="15" y="2.5" width="1.6" height="1.6"/><rect x="18.5" y="2.5" width="1.6" height="1.6"/><rect x="2" y="11" width="1.6" height="1.6"/><rect x="6.5" y="11" width="1.6" height="1.6"/><rect x="15" y="11" width="1.6" height="1.6"/><rect x="18.5" y="11" width="1.6" height="1.6"/></g><path d="M13.5 12 V1.5 Q18 1 19 5" stroke="#232a3c" stroke-width="3.2" fill="none"/><ellipse cx="10.5" cy="12" rx="3.6" ry="3" fill="#232a3c"/><path d="M13.5 12 V1.5 Q18 1 19 5" stroke="#c8cdd8" stroke-width="1.6" fill="none"/><ellipse cx="10.5" cy="12" rx="2.8" ry="2.3" fill="#c8cdd8"/></svg>
<svg style="left:585px;top:436px" width="25" height="17" viewBox="0 0 25 17"><circle cx="19" cy="6" r="5.8" fill="#c8cdd8"/><circle cx="13" cy="8" r="6" fill="#c8cdd8" stroke="#232a3c" stroke-width="1"/><circle cx="7" cy="11" r="6" fill="#c8cdd8" stroke="#232a3c" stroke-width="1"/></svg>
<svg style="left:645px;top:437px" width="22" height="15" viewBox="0 0 22 15"><rect width="22" height="15" fill="#c8cdd8"/><path d="M3.5 3 H10 V5.2 H7.8 V12 H5.7 V5.2 H3.5Z" fill="#232a3c"/><path d="M12 4 H19.5 M12 7 H19.5 M12 10 H19.5 M4 13 H19.5" stroke="#232a3c" stroke-width="1"/></svg>
<svg style="left:706px;top:437px" width="22" height="15" viewBox="0 0 22 15"><rect x="1" y="1" width="20" height="13" stroke="#c8cdd8" stroke-width="1.8" fill="none"/><path d="M1 7.5 H21 M11 1 V14" stroke="#c8cdd8" stroke-width="1.8"/></svg>
<svg style="left:766px;top:434px" width="24" height="20" viewBox="0 0 24 20"><circle cx="21" cy="2.5" r="2.3" fill="#c8cdd8"/><path d="M11 6.5 L15.5 4.5 L18.5 7.5 L22 8.5 M15.5 4.5 L12.5 11 L16.5 14 L15.5 19.5 M12.5 11 L9.5 15 L6 15" stroke="#c8cdd8" stroke-width="2.4" fill="none" stroke-linejoin="round"/><path d="M0 3.5 H8 M0 7 H9 M1 10.5 H8" stroke="#c8cdd8" stroke-width="1.4"/></svg>
<svg style="left:821px;top:434px" width="25" height="20" viewBox="0 0 25 20"><path d="M5.1 4.3 Q8 1.5 12.3 1.6 Q17 2.5 20.1 6 Q23 8 23.4 9.9 Q23 14 19.6 16 Q16 19 12.3 18.8 Q9.5 16 7.9 12.7 Q4 12 1.8 9.9 Q2 6 5.1 4.3Z" stroke="#c8cdd8" stroke-width="1.3" fill="none"/><g fill="#c8cdd8"><circle cx="5.1" cy="4.3" r="1.4"/><circle cx="12.3" cy="1.6" r="1.4"/><circle cx="20.1" cy="6" r="1.4"/><circle cx="23.4" cy="9.9" r="1.4"/><circle cx="19.6" cy="16" r="1.4"/><circle cx="12.3" cy="18.8" r="1.4"/><circle cx="7.9" cy="12.7" r="1.4"/><circle cx="1.8" cy="9.9" r="1.4"/></g></svg>
<svg style="left:881px;top:435px" width="22" height="18" viewBox="0 0 22 18"><path d="M1 6 V1 H6 M16 1 H21 V6 M21 12 V17 H16 M6 17 H1 V12" stroke="#c8cdd8" stroke-width="1.8" fill="none"/><rect x="5.5" y="4.5" width="11" height="9" stroke="#c8cdd8" stroke-width="1.1" stroke-dasharray="1.6 1.2" fill="none"/><path d="M11 6.5 V11.5 M8.5 9 H13.5" stroke="#c8cdd8" stroke-width="1.3"/></svg>
<svg style="left:938px;top:436px" width="30" height="17" viewBox="0 0 30 17"><path d="M1 0 H18 V4 H12 V16 H6.5 V4 H1Z" fill="#c8cdd8"/><text x="12.5" y="16" font-family="Liberation Sans" font-size="11.5" fill="#c8cdd8" stroke="#c8cdd8" stroke-width="0.3">3D</text></svg>
<svg style="left:1007px;top:436px" width="23" height="17" viewBox="0 0 23 17"><path d="M0 0 H19 V6 L10 16 H0Z" fill="#c8cdd8"/><path d="M19 0.5 L3 16.5" stroke="#232a3c" stroke-width="1.6"/><path d="M20 7 L23 10 L15 17 L12 17 L12 14Z" fill="#c8cdd8" stroke="#232a3c" stroke-width="1.2"/></svg>
<svg style="left:1114px;top:435px" width="19" height="19" viewBox="0 0 19 19"><circle cx="7.5" cy="7.5" r="6.5" stroke="#c8cdd8" stroke-width="1.6" fill="none"/><path d="M4 7.5 H11" stroke="#c8cdd8" stroke-width="2.2"/><path d="M12 12 L18 18" stroke="#c8cdd8" stroke-width="2"/></svg>
<div class="a" style="left:1143px;top:441px;width:72px;height:4px;background:#000;border-radius:2px"></div>
<svg style="left:1142px;top:437px" width="8" height="12" viewBox="0 0 8 12"><path d="M0 0 H8 V8 L4 12 L0 8Z" fill="#c8cdd8"/></svg>
<svg style="left:1228px;top:435px" width="19" height="19" viewBox="0 0 19 19"><circle cx="7.5" cy="7.5" r="6.5" stroke="#c8cdd8" stroke-width="1.6" fill="none"/><path d="M4 7.5 H11 M7.5 4 V11" stroke="#c8cdd8" stroke-width="2.2"/><path d="M12 12 L18 18" stroke="#c8cdd8" stroke-width="2"/></svg>
<svg style="left:1262px;top:437px" width="16" height="14" viewBox="0 0 16 14"><rect x="0.8" y="0.8" width="14.4" height="12.4" stroke="#c8cdd8" stroke-width="1.4" fill="none"/><path d="M3.5 7 H12.5" stroke="#c8cdd8" stroke-width="1.3"/><path d="M5.5 5 L3.3 7 L5.5 9 M10.5 5 L12.7 7 L10.5 9" stroke="#c8cdd8" stroke-width="1.3" fill="none"/></svg>
<svg style="left:1296px;top:436px" width="16" height="16" viewBox="0 0 16 16"><circle cx="8" cy="8" r="8" fill="#c8cdd8"/><path d="M7 3 V8.5 L11 12" stroke="#232a3c" stroke-width="1.8" fill="none"/></svg>
<div class="a" style="left:1322px;top:435px;width:102px;height:19px;background:#131722"></div>
<svg style="left:0;top:0" width="1440" height="810" viewBox="0 0 1440 810"><path d="M1333.40 438.50 H1337.60 M1333.40 449.00 H1337.60 M1332.50 439.40 V442.85 M1332.50 444.65 V448.10 M1338.50 439.40 V442.85 M1338.50 444.65 V448.10 M1349.40 438.50 H1353.60 M1349.40 449.00 H1353.60 M1348.50 439.40 V442.85 M1348.50 444.65 V448.10 M1354.50 439.40 V442.85 M1354.50 444.65 V448.10 M1357.40 443.75 H1361.60 M1356.50 439.40 V442.85 M1362.50 439.40 V442.85 M1362.50 444.65 V448.10 M1373.40 438.50 H1377.10 M1373.40 449.00 H1377.10 M1373.40 443.75 H1377.10 M1372.50 444.65 V448.10 M1378.00 439.40 V442.85 M1381.40 438.50 H1385.60 M1386.50 439.40 V442.85 M1386.50 444.65 V448.10 M1394.40 440.50 H1397.10 M1394.40 449.00 H1397.10 M1393.50 441.40 V443.85 M1393.50 445.65 V448.10 M1398.00 441.40 V443.85 M1398.00 445.65 V448.10 M1404.00 441.40 V443.85 M1404.00 445.65 V448.10 M1407.40 440.50 H1410.60 M1407.40 449.00 H1410.60 M1406.50 441.40 V443.85 M1406.50 445.65 V448.10 M1411.50 441.40 V443.85 M1411.50 445.65 V448.10" stroke="#c8cdd8" stroke-width="1.15" fill="none" stroke-linecap="square"/><rect x="1342.80" y="440.95" width="1.5" height="1.5" fill="#c8cdd8"/><rect x="1342.80" y="445.36" width="1.5" height="1.5" fill="#c8cdd8"/><rect x="1366.80" y="440.95" width="1.5" height="1.5" fill="#c8cdd8"/><rect x="1366.80" y="445.36" width="1.5" height="1.5" fill="#c8cdd8"/><rect x="1388.80" y="442.35" width="1.5" height="1.5" fill="#c8cdd8"/><rect x="1388.80" y="445.92" width="1.5" height="1.5" fill="#c8cdd8"/></svg>
<div class="a" style="left:5px;top:460px;width:165px;height:35px;background:#161b28"></div>
<svg style="left:28px;top:474px" width="20" height="12" viewBox="0 0 20 12"><path d="M2 1 H0.7 V10.5 H2" stroke="#c8cdd8" stroke-width="1" fill="none"/><rect x="4" y="0.2" width="9" height="2.6" fill="#c8cdd8"/><rect x="4" y="4.1" width="9" height="2.6" fill="#c8cdd8"/><rect x="4" y="8" width="9" height="2.8" fill="#c8cdd8"/><path d="M16.5 0 V4.5 M14.3 2.5 L16.5 4.8 L18.7 2.5 M16.5 11 V6.5 M14.3 8.5 L16.5 6.2 L18.7 8.5" stroke="#c8cdd8" stroke-width="1.2" fill="none"/></svg>
<svg style="left:80px;top:474px" width="18" height="12" viewBox="0 0 18 12"><rect x="0.7" y="0.2" width="9.3" height="2.6" fill="#c8cdd8"/><rect x="0.7" y="4.1" width="9.3" height="2.6" fill="#c8cdd8"/><rect x="0.7" y="8" width="9.3" height="2.8" fill="#c8cdd8"/><path d="M12 3 H17 M14.5 0.5 V5.5 M12 8.5 H17" stroke="#c8cdd8" stroke-width="1.1"/></svg>
<svg style="left:123px;top:474px" width="21" height="10" viewBox="0 0 21 10"><path d="M6.1 0 L12.2 9 H0Z" fill="#2ee88c"/><path d="M14.6 6 H20 L17.3 9Z" fill="#c8cdd8"/></svg>
<div class="a" style="left:170px;top:461px;width:1266px;height:24px;background:#131824"></div>
<div class="a" style="left:170px;top:485px;width:1266px;height:10px;background:#232a3c"></div>
<svg style="left:0;top:0" width="1440" height="810" viewBox="0 0 1440 810"><path d="M170.5 461 V484 M176.5 479 V484 M182.5 479 V484 M188.5 479 V484 M194.5 479 V484 M200.5 479 V484 M206.5 479 V484 M212.5 479 V484 M218.5 479 V484 M224.5 479 V484 M230.5 475 V484 M236.5 479 V484 M242.5 479 V484 M248.5 479 V484 M254.5 479 V484 M260.5 479 V484 M266.5 479 V484 M272.5 479 V484 M278.5 479 V484 M284.5 479 V484 M290.5 471 V484 M296.5 479 V484 M302.5 479 V484 M308.5 479 V484 M314.5 479 V484 M320.5 479 V484 M326.5 479 V484 M332.5 479 V484 M338.5 479 V484 M344.5 479 V484 M350.5 475 V484 M356.5 479 V484 M362.5 479 V484 M368.5 479 V484 M374.5 479 V484 M380.5 479 V484 M386.5 479 V484 M392.5 479 V484 M398.5 479 V484 M404.5 479 V484 M410.5 471 V484 M416.5 479 V484 M422.5 479 V484 M428.5 479 V484 M434.5 479 V484 M440.5 479 V484 M446.5 479 V484 M452.5 479 V484 M458.5 479 V484 M464.5 479 V484 M470.5 475 V484 M476.5 479 V484 M482.5 479 V484 M488.5 479 V484 M494.5 479 V484 M500.5 479 V484 M506.5 479 V484 M512.5 479 V484 M518.5 479 V484 M524.5 479 V484 M530.5 471 V484 M536.5 479 V484 M542.5 479 V484 M548.5 479 V484 M554.5 479 V484 M560.5 479 V484 M566.5 479 V484 M572.5 479 V484 M578.5 479 V484 M584.5 479 V484 M590.5 475 V484 M596.5 479 V484 M602.5 479 V484 M608.5 479 V484 M614.5 479 V484 M620.5 479 V484 M626.5 479 V484 M632.5 479 V484 M638.5 479 V484 M644.5 479 V484 M650.5 471 V484 M656.5 479 V484 M662.5 479 V484 M668.5 479 V484 M674.5 479 V484 M680.5 479 V484 M686.5 479 V484 M692.5 479 V484 M698.5 479 V484 M704.5 479 V484 M710.5 475 V484 M716.5 479 V484 M722.5 479 V484 M728.5 479 V484 M734.5 479 V484 M740.5 479 V484 M746.5 479 V484 M752.5 479 V484 M758.5 479 V484 M764.5 479 V484 M770.5 471 V484 M776.5 479 V484 M782.5 479 V484 M788.5 479 V484 M794.5 479 V484 M800.5 479 V484 M806.5 479 V484 M812.5 479 V484 M818.5 479 V484 M824.5 479 V484 M830.5 475 V484 M836.5 479 V484 M842.5 479 V484 M848.5 479 V484 M854.5 479 V484 M860.5 479 V484 M866.5 479 V484 M872.5 479 V484 M878.5 479 V484 M884.5 479 V484 M890.5 471 V484 M896.5 479 V484 M902.5 479 V484 M908.5 479 V484 M914.5 479 V484 M920.5 479 V484 M926.5 479 V484 M932.5 479 V484 M938.5 479 V484 M944.5 479 V484 M950.5 475 V484 M956.5 479 V484 M962.5 479 V484 M968.5 479 V484 M974.5 479 V484 M980.5 479 V484 M986.5 479 V484 M992.5 479 V484 M998.5 479 V484 M1004.5 479 V484 M1010.5 471 V484 M1016.5 479 V484 M1022.5 479 V484 M1028.5 479 V484 M1034.5 479 V484 M1040.5 479 V484 M1046.5 479 V484 M1052.5 479 V484 M1058.5 479 V484 M1064.5 479 V484 M1070.5 475 V484 M1076.5 479 V484 M1082.5 479 V484 M1088.5 479 V484 M1094.5 479 V484 M1100.5 479 V484 M1106.5 479 V484 M1112.5 479 V484 M1118.5 479 V484 M1124.5 479 V484 M1130.5 471 V484 M1136.5 479 V484 M1142.5 479 V484 M1148.5 479 V484 M1154.5 479 V484 M1160.5 479 V484 M1166.5 479 V484 M1172.5 479 V484 M1178.5 479 V484 M1184.5 479 V484 M1190.5 475 V484 M1196.5 479 V484 M1202.5 479 V484 M1208.5 479 V484 M1214.5 479 V484 M1220.5 479 V484 M1226.5 479 V484 M1232.5 479 V484 M1238.5 479 V484 M1244.5 479 V484 M1250.5 471 V484 M1256.5 479 V484 M1262.5 479 V484 M1268.5 479 V484 M1274.5 479 V484 M1280.5 479 V484 M1286.5 479 V484 M1292.5 479 V484 M1298.5 479 V484 M1304.5 479 V484 M1310.5 475 V484 M1316.5 479 V484 M1322.5 479 V484 M1328.5 479 V484 M1334.5 479 V484 M1340.5 479 V484 M1346.5 479 V484 M1352.5 479 V484 M1358.5 479 V484 M1364.5 479 V484 M1370.5 471 V484 M1376.5 479 V484 M1382.5 479 V484 M1388.5 479 V484 M1394.5 479 V484 M1400.5 479 V484 M1406.5 479 V484 M1412.5 479 V484" stroke="#7f879a" stroke-width="1"/><path d="M170 484.5 H1412" stroke="#6a7288" stroke-width="1"/></svg>
<div class="a" style="left:171px;top:463px;font-size:9.2px;line-height:12px;color:#b4bac6;white-space:nowrap;letter-spacing:0.65px">00:00:00:00</div>
<div class="a" style="left:291px;top:463px;font-size:9.2px;line-height:12px;color:#b4bac6;white-space:nowrap;letter-spacing:0.65px">00:01:00:00</div>
<div class="a" style="left:411px;top:463px;font-size:9.2px;line-height:12px;color:#b4bac6;white-space:nowrap;letter-spacing:0.65px">00:02:00:00</div>
<div class="a" style="left:531px;top:463px;font-size:9.2px;line-height:12px;color:#b4bac6;white-space:nowrap;letter-spacing:0.65px">00:03:00:00</div>
<div class="a" style="left:651px;top:463px;font-size:9.2px;line-height:12px;color:#b4bac6;white-space:nowrap;letter-spacing:0.65px">00:04:00:00</div>
<div class="a" style="left:771px;top:463px;font-size:9.2px;line-height:12px;color:#b4bac6;white-space:nowrap;letter-spacing:0.65px">00:05:00:00</div>
<div class="a" style="left:891px;top:463px;font-size:9.2px;line-height:12px;color:#b4bac6;white-space:nowrap;letter-spacing:0.65px">00:06:00:00</div>
<div class="a" style="left:1011px;top:463px;font-size:9.2px;line-height:12px;color:#b4bac6;white-space:nowrap;letter-spacing:0.65px">00:07:00:00</div>
<div class="a" style="left:1131px;top:463px;font-size:9.2px;line-height:12px;color:#b4bac6;white-space:nowrap;letter-spacing:0.65px">00:08:00:00</div>
<div class="a" style="left:1251px;top:463px;font-size:9.2px;line-height:12px;color:#b4bac6;white-space:nowrap;letter-spacing:0.65px">00:09:00:00</div>
<div class="a" style="left:1371px;top:463px;font-size:9.2px;line-height:12px;color:#b4bac6;white-space:nowrap;letter-spacing:0.65px">00:10:00</div>
<div class="a" style="left:580px;top:462px;width:1px;height:23px;background:#e8ecf2"></div>
<div class="a" style="left:5px;top:495px;width:165px;height:287px;background:#232a3c;border-bottom:1px solid #03050c;border-right:1px solid #03050c"></div>
<div class="a" style="left:40px;top:500px;width:1px;height:270px;background:#2f3850"></div>
<div class="a" style="left:170px;top:495px;width:1242px;height:286px;background:#161b28"></div>
<div class="a" style="left:170px;top:556px;width:1242px;height:1px;background:#293146"></div>
<div class="a" style="left:6px;top:555px;width:26px;height:3px;background:#2f3850"></div>
<div class="a" style="left:170px;top:617px;width:1242px;height:1px;background:#293146"></div>
<div class="a" style="left:6px;top:616px;width:26px;height:3px;background:#2f3850"></div>
<div class="a" style="left:170px;top:668px;width:1242px;height:1px;background:#293146"></div>
<div class="a" style="left:6px;top:667px;width:26px;height:3px;background:#2f3850"></div>
<div class="a" style="left:170px;top:719px;width:1242px;height:1px;background:#293146"></div>
<div class="a" style="left:6px;top:718px;width:26px;height:3px;background:#2f3850"></div>
<div class="a" style="left:170px;top:770px;width:1242px;height:1px;background:#293146"></div>
<div class="a" style="left:6px;top:769px;width:26px;height:3px;background:#2f3850"></div>
<div class="a" style="left:1412px;top:495px;width:24px;height:275px;background:#232a3c"></div><div class="a" style="left:1412px;top:770px;width:24px;height:11px;background:#161b28"></div><div class="a" style="left:1412px;top:462px;width:1px;height:23px;background:#8a93a8"></div>
<svg style="left:1419px;top:499px" width="12" height="6" viewBox="0 0 12 6"><path d="M0 6 L6 0 L12 6Z" fill="#59647e"/></svg>
<!-- TRACKS -->
<div class="a" style="left:55px;top:506px;font-size:13px;line-height:14px;color:#d8dbe2;white-space:nowrap">视频</div>
<div class="a" style="left:55px;top:567px;font-size:13px;line-height:14px;color:#d8dbe2;white-space:nowrap">叠加1</div>
<div class="a" style="left:55px;top:623px;font-size:13px;line-height:14px;color:#d8dbe2;white-space:nowrap">标题1</div>
<div class="a" style="left:55px;top:674px;font-size:13px;line-height:14px;color:#d8dbe2;white-space:nowrap">声音</div>
<div class="a" style="left:55px;top:725px;font-size:13px;line-height:14px;color:#d8dbe2;white-space:nowrap">音乐1</div>
<svg style="left:61px;top:528px" width="13" height="13" viewBox="0 0 13 13"><g stroke="#c8cdd8" stroke-width="1.7" fill="none"><rect x="1" y="5.5" width="7" height="4.5" rx="2.25" transform="rotate(-45 4.5 7.75)"/><rect x="5" y="2.5" width="7" height="4.5" rx="2.25" transform="rotate(-45 8.5 4.75)"/></g></svg>
<svg style="left:79px;top:539px" width="7" height="5" viewBox="0 0 7 5"><path d="M0 0 H7 L3.5 4.5Z" fill="#c8cdd8"/></svg>
<svg style="left:96px;top:527px" width="18" height="14" viewBox="0 0 18 14"><path d="M0 4 H3.5 L8.5 0 V14 L3.5 10 H0Z" fill="#c8cdd8"/><path d="M11 4 Q13 7 11 10 M13.8 1.5 Q17.3 7 13.8 12.5" stroke="#c8cdd8" stroke-width="1.8" fill="none"/></svg>
<svg style="left:134px;top:528px" width="12" height="12" viewBox="0 0 12 12"><rect width="12" height="12" fill="#c8cdd8"/><path d="M0 0h2v2H0zM4 0h2v2H4zM8 0h2v2H8zM2 2h2v2H2zM6 2h2v2H6zM10 2h2v2h-2zM0 4h2v2H0zM4 4h2v2H4zM8 4h2v2H8zM2 6h2v2H2zM6 6h2v2H6zM10 6h2v2h-2zM0 8h2v2H0zM4 8h2v2H4zM8 8h2v2H8zM2 10h2v2H2zM6 10h2v2H6zM10 10h2v2h-2z" fill="#232a3c"/></svg>
<svg style="left:61px;top:588px" width="13" height="13" viewBox="0 0 13 13"><g stroke="#56627c" stroke-width="1.7" fill="none"><rect x="1" y="5.5" width="7" height="4.5" rx="2.25" transform="rotate(-45 4.5 7.75)"/><rect x="5" y="2.5" width="7" height="4.5" rx="2.25" transform="rotate(-45 8.5 4.75)"/></g></svg>
<svg style="left:96px;top:588px" width="18" height="14" viewBox="0 0 18 14"><path d="M0 4 H3.5 L8.5 0 V14 L3.5 10 H0Z" fill="#c8cdd8"/><path d="M11 4 Q13 7 11 10 M13.8 1.5 Q17.3 7 13.8 12.5" stroke="#c8cdd8" stroke-width="1.8" fill="none"/></svg>
<svg style="left:134px;top:589px" width="12" height="12" viewBox="0 0 12 12"><rect width="12" height="12" fill="#c8cdd8"/><path d="M0 0h2v2H0zM4 0h2v2H4zM8 0h2v2H8zM2 2h2v2H2zM6 2h2v2H6zM10 2h2v2h-2zM0 4h2v2H0zM4 4h2v2H4zM8 4h2v2H8zM2 6h2v2H2zM6 6h2v2H6zM10 6h2v2h-2zM0 8h2v2H0zM4 8h2v2H4zM8 8h2v2H8zM2 10h2v2H2zM6 10h2v2H6zM10 10h2v2h-2z" fill="#232a3c"/></svg>
<svg style="left:61px;top:644px" width="13" height="13" viewBox="0 0 13 13"><g stroke="#56627c" stroke-width="1.7" fill="none"><rect x="1" y="5.5" width="7" height="4.5" rx="2.25" transform="rotate(-45 4.5 7.75)"/><rect x="5" y="2.5" width="7" height="4.5" rx="2.25" transform="rotate(-45 8.5 4.75)"/></g></svg>
<svg style="left:61px;top:695px" width="13" height="13" viewBox="0 0 13 13"><g stroke="#56627c" stroke-width="1.7" fill="none"><rect x="1" y="5.5" width="7" height="4.5" rx="2.25" transform="rotate(-45 4.5 7.75)"/><rect x="5" y="2.5" width="7" height="4.5" rx="2.25" transform="rotate(-45 8.5 4.75)"/></g></svg>
<svg style="left:96px;top:695px" width="18" height="14" viewBox="0 0 18 14"><path d="M0 4 H3.5 L8.5 0 V14 L3.5 10 H0Z" fill="#c8cdd8"/><path d="M11 4 Q13 7 11 10 M13.8 1.5 Q17.3 7 13.8 12.5" stroke="#c8cdd8" stroke-width="1.8" fill="none"/></svg>
<svg style="left:134px;top:699px" width="12" height="8" viewBox="0 0 12 8"><path d="M0.5 0.5 H2.5 L4 5.5 H8 L9.5 0.5 H11.5" stroke="#c8cdd8" stroke-width="2" fill="none"/></svg>
<svg style="left:61px;top:746px" width="13" height="13" viewBox="0 0 13 13"><g stroke="#56627c" stroke-width="1.7" fill="none"><rect x="1" y="5.5" width="7" height="4.5" rx="2.25" transform="rotate(-45 4.5 7.75)"/><rect x="5" y="2.5" width="7" height="4.5" rx="2.25" transform="rotate(-45 8.5 4.75)"/></g></svg>
<svg style="left:96px;top:746px" width="18" height="14" viewBox="0 0 18 14"><path d="M0 4 H3.5 L8.5 0 V14 L3.5 10 H0Z" fill="#c8cdd8"/><path d="M11 4 Q13 7 11 10 M13.8 1.5 Q17.3 7 13.8 12.5" stroke="#c8cdd8" stroke-width="1.8" fill="none"/></svg>
<svg style="left:134px;top:750px" width="12" height="8" viewBox="0 0 12 8"><path d="M0.5 0.5 H2.5 L4 5.5 H8 L9.5 0.5 H11.5" stroke="#c8cdd8" stroke-width="2" fill="none"/></svg>
<svg style="left:11px;top:521px" width="21" height="13" viewBox="0 0 21 13"><rect x="0" y="0" width="15" height="12.5" rx="2" fill="#c8cdd8"/><path d="M16 3 L20 0.5 V12 L16 9.5Z" fill="#c8cdd8"/><path d="M6 3.5 L10 6.2 L6 9Z" fill="#232a3c"/></svg>
<svg style="left:11px;top:582px" width="21" height="13" viewBox="0 0 21 13"><rect x="0" y="0" width="15" height="12.5" rx="2" fill="#c8cdd8"/><path d="M16 3 L20 0.5 V12 L16 9.5Z" fill="#c8cdd8"/><path d="M5.8 4 L7.8 2.8 H8.6 V10.5" stroke="#232a3c" stroke-width="1.9" fill="none"/></svg>
<div class="a" style="left:10px;top:643px;font-size:8px;line-height:8px;color:#c8cdd8;font-weight:bold">1</div>
<svg style="left:16px;top:637px" width="11" height="11" viewBox="0 0 11 11"><path d="M0 0 H11 V2.2 H6.6 V10.5 H4.4 V2.2 H0Z" fill="#c8cdd8"/></svg>
<svg style="left:15px;top:688px" width="17" height="12" viewBox="0 0 17 12"><circle cx="4.2" cy="3.7" r="3.2" fill="#c8cdd8"/><path d="M6 5.5 L12 9 Q14 10.5 15.5 9.5" stroke="#c8cdd8" stroke-width="1.6" fill="none"/></svg>
<div class="a" style="left:10px;top:745px;font-size:8px;line-height:8px;color:#c8cdd8;font-weight:bold">1</div>
<svg style="left:16px;top:738px" width="13" height="12" viewBox="0 0 13 12"><path d="M4.5 10 V2.5 L11.5 1 V8.8" stroke="#c8cdd8" stroke-width="1.6" fill="none"/><path d="M4 1 L12 -0.5 V2.5 L4 4Z" fill="#c8cdd8"/><circle cx="2.8" cy="10" r="2.5" fill="#c8cdd8"/><circle cx="9.8" cy="8.8" r="2.5" fill="#c8cdd8"/></svg>
<div class="a" style="left:172px;top:772px;width:26px;height:1px;background:#3a435a"></div>
<div class="a" style="left:339px;top:496px;width:366px;height:60px;background:#ff9a1e;border-radius:0 3px 3px 0"></div>
<div class="a" style="left:345px;top:497px;width:83px;height:58px;background:#000"></div>
<div class="a" style="left:428px;top:497px;width:270px;height:58px;background:#136b58"></div>
<div class="a" style="left:345px;top:496px;width:83px;height:1px;background:#e0967a"></div>
<div class="a" style="left:345px;top:555px;width:83px;height:1px;background:#e0967a"></div>
<div class="a" style="left:428px;top:496px;width:270px;height:1px;background:#d7a64a"></div>
<div class="a" style="left:428px;top:555px;width:270px;height:1px;background:#d7a64a"></div>
<div class="a" style="left:699px;top:510px;width:5px;height:5px;background:#f6d49a;border-right:1px solid #b87020;border-bottom:1px solid #b87020"></div><div class="a" style="left:699px;top:517px;width:5px;height:5px;background:#f6d49a;border-right:1px solid #b87020;border-bottom:1px solid #b87020"></div><div class="a" style="left:699px;top:524px;width:5px;height:5px;background:#f6d49a;border-right:1px solid #b87020;border-bottom:1px solid #b87020"></div><div class="a" style="left:699px;top:531px;width:5px;height:5px;background:#f6d49a;border-right:1px solid #b87020;border-bottom:1px solid #b87020"></div><div class="a" style="left:699px;top:538px;width:5px;height:5px;background:#f6d49a;border-right:1px solid #b87020;border-bottom:1px solid #b87020"></div>
<div class="a" style="left:339px;top:510px;width:5px;height:5px;background:#f0d0a8;border-right:1px solid #b87020;border-bottom:1px solid #b87020"></div><div class="a" style="left:339px;top:516px;width:5px;height:5px;background:#f0d0a8;border-right:1px solid #b87020;border-bottom:1px solid #b87020"></div><div class="a" style="left:339px;top:522px;width:5px;height:5px;background:#f0d0a8;border-right:1px solid #b87020;border-bottom:1px solid #b87020"></div><div class="a" style="left:339px;top:528px;width:5px;height:5px;background:#f0d0a8;border-right:1px solid #b87020;border-bottom:1px solid #b87020"></div><div class="a" style="left:339px;top:534px;width:5px;height:5px;background:#f0d0a8;border-right:1px solid #b87020;border-bottom:1px solid #b87020"></div><div class="a" style="left:339px;top:540px;width:5px;height:5px;background:#f0d0a8;border-right:1px solid #b87020;border-bottom:1px solid #b87020"></div>
<div class="a" style="left:346px;top:527px;width:16px;height:12px;background:#1a1a1a"></div>
<svg style="left:347px;top:529px" width="13" height="9" viewBox="0 0 13 9"><path d="M0 2.5 H2.5 L6 0 V9 L2.5 6.5 H0Z" fill="#f0a020"/><path d="M7.5 2.5 Q9 4.5 7.5 6.5 M9.5 1 Q12 4.5 9.5 8" stroke="#f0a020" stroke-width="1.3" fill="none"/></svg>
<div class="a" style="left:433px;top:518px;font-size:13.5px;line-height:16px;color:#eef2f0;white-space:nowrap">HOWYOU~1.MP4</div>
<div class="a" style="left:338px;top:495px;width:1px;height:285px;background:#a9c6f5"></div>
<svg style="left:332px;top:465px" width="14" height="13" viewBox="0 0 14 13"><path d="M0 0 H14 V6.5 L7 13 L0 6.5Z" fill="#f4f0e0" opacity="0.88"/></svg>
<svg style="left:0;top:0" width="1440" height="810" viewBox="0 0 1440 810"><path d="M513 556 L529 560.5 L525.8 561.6 L633.9 678.3 A0.9 0.9 0 0 1 632.6 679.5 L518.5 568.8 L516.5 572Z" fill="#2a0808" stroke="#2a0808" stroke-width="1.6" stroke-linejoin="round" opacity="0.6"/><path d="M513 556 L529 560.5 L525.8 561.6 L633.9 678.3 A0.9 0.9 0 0 1 632.6 679.5 L518.5 568.8 L516.5 572Z" fill="#fa2416"/></svg>
<div class="a" style="left:34px;top:788px;width:25px;height:12px;background:#2c3650;border-radius:2px"></div>
<svg style="left:37px;top:790px" width="19" height="8" viewBox="0 0 19 8"><path d="M0 5 H5 M3 3 L5 5 L3 7" stroke="#1ba3f0" stroke-width="1.2" fill="none"/><path d="M7 2 V7 H18 V2 M11 7 V3 M14 7 V3" stroke="#1ba3f0" stroke-width="1.2" fill="none"/><path d="M14 0 H19 L16.5 3Z" fill="#1ba3f0"/></svg>
<svg style="left:73px;top:788px" width="24" height="11" viewBox="0 0 24 11"><path d="M5 0 V9.5 L0 4.75Z M18 0 V9.5 L23 4.75Z" fill="#c8cdd8"/></svg>
</body></html>
